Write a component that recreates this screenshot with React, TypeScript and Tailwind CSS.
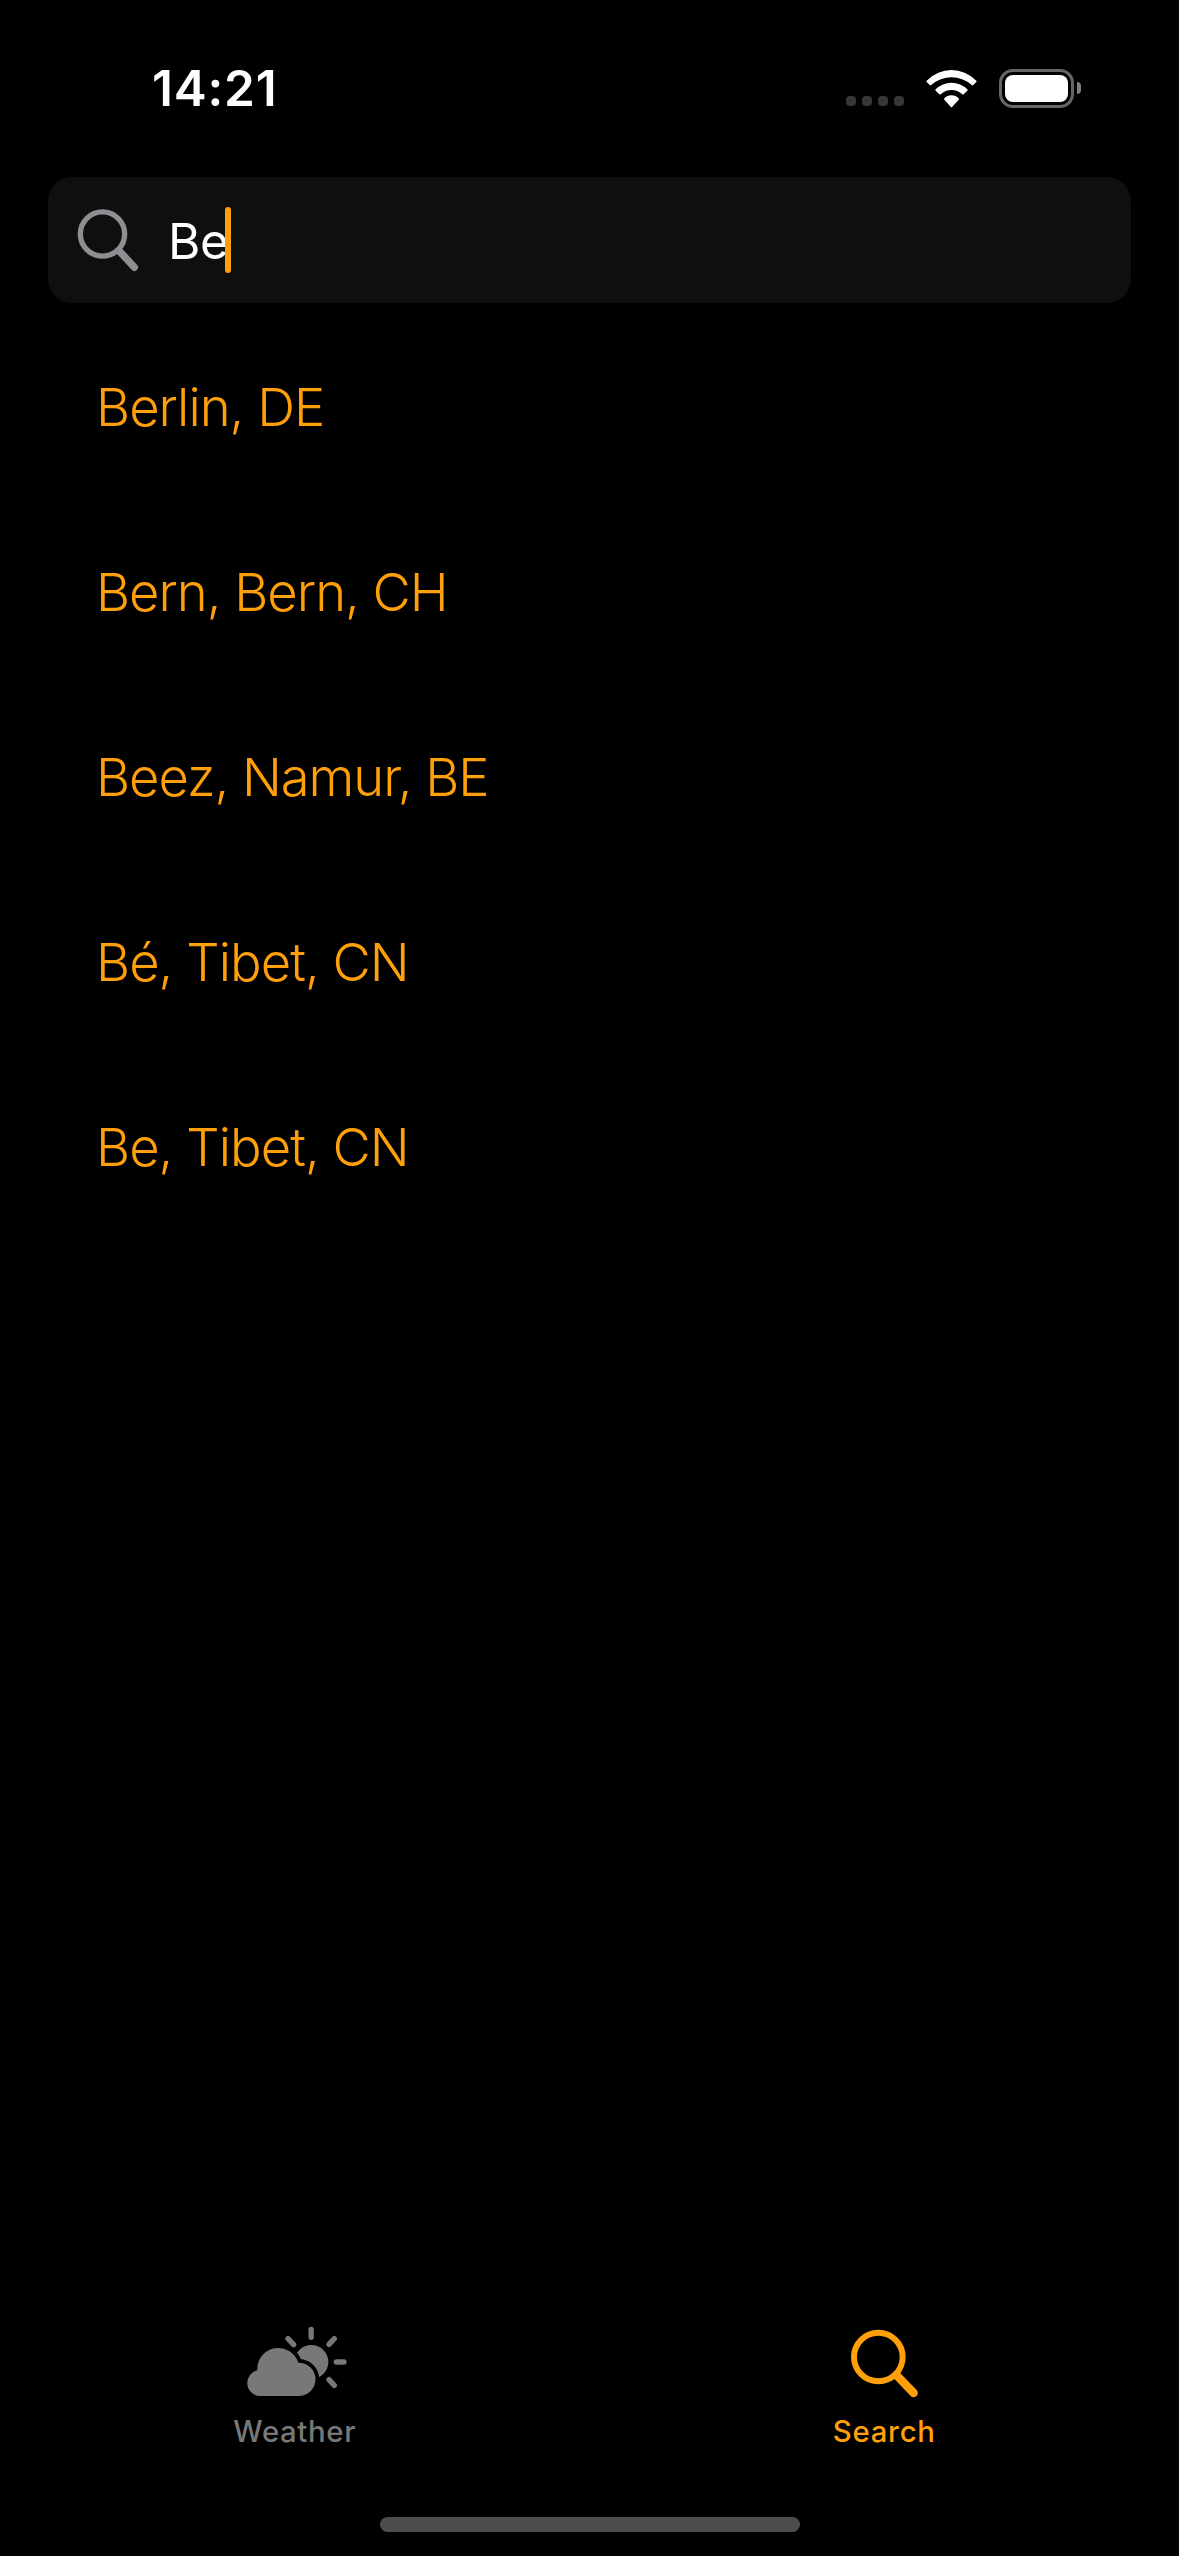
const cities = [
  { name: "Berlin, DE", tracking: "tracking-[-0.95px]" },
  { name: "Bern, Bern, CH", tracking: "tracking-[-1.02px]" },
  { name: "Beez, Namur, BE", tracking: "tracking-[-1.05px]" },
  { name: "Bé, Tibet, CN", tracking: "tracking-[-0.95px]" },
  { name: "Be, Tibet, CN", tracking: "tracking-[-0.95px]" },
];

function StatusBar() {
  return (
    <header className="flex h-[177px] items-start justify-between pt-[58px] pr-[98px] pl-[152px]">
      <span className="text-[49.5px] leading-[60px] font-semibold tracking-[0.8px]">14:21</span>
      <div className="flex h-[60px] items-center">
        <div className="mt-[26px] mr-[22px] flex gap-1.5">
          <i className="size-2.5 rounded-[4px] bg-[#363636]" />
          <i className="size-2.5 rounded-[4px] bg-[#363636]" />
          <i className="size-2.5 rounded-[4px] bg-[#363636]" />
          <i className="size-2.5 rounded-[4px] bg-[#363636]" />
        </div>
        <svg className="mr-[22px] h-[39px] w-[51px]" viewBox="318 84 153 117" fill="#fff">
          <path d="M320 119Q353 87 394.500 87Q436 87 469 119Q471 121 469 123L459 133Q457 134 455 132Q428 109 394.500 109Q361 109 334 132Q332 134 330 133L320 123Q318 121 320 119Z" />
          <path d="M347 145Q367 125 394.500 125Q422 125 442 145Q444 147 442 149L431 160Q429 162 427 160Q413 147 394.500 147Q376 147 362 160Q360 162 358 160L347 149Q345 147 347 145Z" />
          <path d="M373 172Q381 163 394.500 163Q408 163 416 172Q418 174 416 176L397 197Q394.500 200 392 197L373 176Q371 174 373 172Z" />
        </svg>
        <div className="flex h-[39px] w-[75px] rounded-[14px] border-3 border-[#666] p-[3px]">
          <div className="flex-1 rounded-[8px] bg-white" />
        </div>
        <div className="ml-[3px] h-3 w-1 rounded-r-full bg-[#808080]" />
      </div>
    </header>
  );
}

function SearchField() {
  return (
    <div className="mx-12 flex h-[126px] items-center rounded-[24px] bg-[#0f0f0f] pl-[29px]">
      <svg className="h-16 w-[62px]" viewBox="141 144 186 192" fill="none" stroke="#8e8e93">
        <circle cx="217.500" cy="222" r="66.500" strokeWidth="16" />
        <path d="M267 272L313 322" strokeWidth="22" strokeLinecap="round" />
      </svg>
      <span className="ml-[29px] pt-0.5 text-[49.5px] leading-[66px] tracking-[-0.5px]">Be</span>
      <div className="-ml-[3px] h-[66px] w-1.5 rounded-full bg-[#ff9f0a]" />
    </div>
  );
}

function WeatherIcon() {
  const cloud = "M150 288A39 39 0 0 1 142 211A63 63 0 0 1 265 188A50 50 0 0 1 268 288Z";
  return (
    <svg className="h-[71px] w-[101px]" viewBox="108 78 303 213" fill="currentColor">
      <mask id="cloud-gap" maskUnits="userSpaceOnUse" x="108" y="78" width="303" height="213">
        <rect x="108" y="78" width="303" height="213" fill="#fff" />
        <path d={cloud} fill="#000" stroke="#000" strokeWidth="22" />
      </mask>
      <circle cx="304" cy="186" r="51" mask="url(#cloud-gap)" />
      <path d={cloud} />
      <path
        d="M303.500 88V112M379 186H402M373 116L357 133M234 116L251 134M357 239L373 256"
        stroke="currentColor"
        strokeWidth="16"
        strokeLinecap="round"
      />
    </svg>
  );
}

function TabBar() {
  return (
    <nav className="grid h-[191px] grid-cols-2">
      <div className="flex flex-col items-center text-[#787878]">
        <div className="flex h-[88px] pl-[3px]">
          <WeatherIcon />
        </div>
        <span className="text-[29.3px] leading-9 font-[450] tracking-[0.65px]">Weather</span>
      </div>
      <div className="flex flex-col items-center text-[#ff9f0a]">
        <div className="flex h-[88px] pt-[3px]">
          <svg className="size-[69px]" viewBox="150 87 207 207" fill="none" stroke="currentColor">
            <circle cx="235" cy="171" r="73" strokeWidth="18" />
            <path d="M290 226L341 279" strokeWidth="25" strokeLinecap="round" />
          </svg>
        </div>
        <span className="text-[29.3px] leading-9 font-[450] tracking-[0.75px]">Search</span>
      </div>
    </nav>
  );
}

export default function App() {
  return (
    <div className="flex h-[2556px] w-[1179px] flex-col overflow-hidden bg-black font-['Inter',sans-serif] text-white">
      <StatusBar />
      <SearchField />
      <ul className="mt-3 flex-1 pl-[96px] text-[52.5px] font-[320] text-[#ff9f0a]">
        {cities.map((city) => (
          <li key={city.name} className={`leading-[185px] ${city.tracking}`}>
            {city.name}
          </li>
        ))}
      </ul>
      <TabBar />
      <div className="mx-auto mb-6 h-[15px] w-[420px] shrink-0 rounded-full bg-[#4d4d4d]" />
    </div>
  );
}
